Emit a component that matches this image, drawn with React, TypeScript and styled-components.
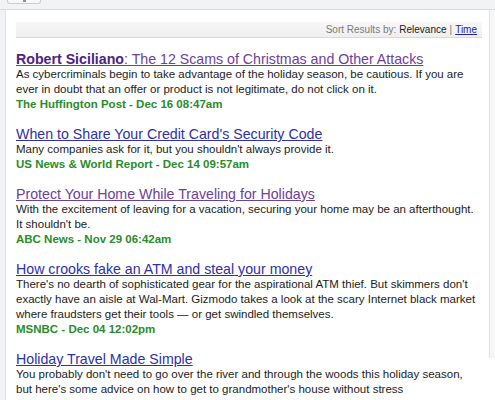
import styled, { createGlobalStyle } from 'styled-components'

const GlobalStyle = createGlobalStyle`
  html, body {
    margin: 0;
    padding: 0;
    background: #ffffff;
    font-family: "Liberation Sans", Arial, sans-serif;
  }
`;

const Page = styled.div`
  width: 495px;
  height: 400px;
  overflow: hidden;
  display: flex;
  flex-direction: column;
`;

const TopStrip = styled.div`
  height: 9px;
  flex: none;
  background: #f1f3f5;
  border-bottom: 1px solid #d6dce2;
  padding-left: 7px;
`;

const TabButton = styled.div`
  width: 32px;
  height: 3px;
  background: #f8f8f8;
  border: 1px solid #c9cdd1;
  border-top: none;
  border-radius: 0 0 3px 3px;
  display: flex;
  justify-content: center;
`;

const TabMark = styled.div`
  width: 3px;
  height: 2px;
  background: #8a8f96;
`;

const Body = styled.div`
  flex: 1;
  display: flex;
  align-items: flex-start;
`;

const LeftRail = styled.div`
  width: 5px;
  align-self: stretch;
  background: #f0f2f5;
  border-right: 1px solid #dde2e7;
`;

const Main = styled.div`
  flex: 1;
  padding: 12px 7px 0 10px;
`;

const RightRail = styled.div`
  width: 5px;
  height: 348px;
  background: #f6f6f6;
  border-left: 1px solid #e2e2e2;
`;

const SortBar = styled.div`
  height: 15px;
  display: flex;
  align-items: center;
  justify-content: flex-end;
  padding-right: 5px;
  background: linear-gradient(#f7f7f7, #efefef);
  border-bottom: 1px solid #d9d9d9;
  font-size: 10px;
  color: #7a7a7a;
  gap: 3px;
`;

const SortValue = styled.span<{ $link?: boolean }>`
  color: ${(p) => (p.$link ? '#2323a8' : '#1a1a1a')};
  text-decoration: ${(p) => (p.$link ? 'underline' : 'none')};
`;

const Results = styled.div`
  padding-top: 13px;
  width: 461px;
`;

const Item = styled.div`
  margin-bottom: 15px;
`;

const Title = styled.a<{ $visited?: boolean }>`
  display: block;
  font-size: 14.2px;
  line-height: 16px;
  color: ${(p) => (p.$visited ? '#6d4199' : '#3030a8')};
  text-decoration: underline;
  white-space: nowrap;
`;

const Author = styled.b`
  color: #4e2383;
`;

const Snippet = styled.div`
  font-size: 11.5px;
  line-height: 15px;
  color: #1c1c1c;
`;

const Source = styled.div`
  font-size: 11.5px;
  line-height: 14px;
  font-weight: bold;
  color: #2a8c2a;
`;

type Story = {
  author?: string;
  title: string;
  visited?: boolean;
  text: string;
  source: string;
};

const stories: Story[] = [
  {
    author: 'Robert Siciliano',
    title: ': The 12 Scams of Christmas and Other Attacks',
    visited: true,
    text: 'As cybercriminals begin to take advantage of the holiday season, be cautious. If you are ever in doubt that an offer or product is not legitimate, do not click on it.',
    source: 'The Huffington Post - Dec 16 08:47am',
  },
  {
    title: "When to Share Your Credit Card's Security Code",
    text: "Many companies ask for it, but you shouldn't always provide it.",
    source: 'US News & World Report - Dec 14 09:57am',
  },
  {
    title: 'Protect Your Home While Traveling for Holidays',
    visited: true,
    text: "With the excitement of leaving for a vacation, securing your home may be an afterthought. It shouldn't be.",
    source: 'ABC News - Nov 29 06:42am',
  },
  {
    title: 'How crooks fake an ATM and steal your money',
    text: "There's no dearth of sophisticated gear for the aspirational ATM thief. But skimmers don't exactly have an aisle at Wal-Mart. Gizmodo takes a look at the scary Internet black market where fraudsters get their tools \u2014 or get swindled themselves.",
    source: 'MSNBC - Dec 04 12:02pm',
  },
  {
    title: 'Holiday Travel Made Simple',
    text: "You probably don't need to go over the river and through the woods this holiday season, but here's some advice on how to get to grandmother's house without stress",
    source: 'Fox News - Dec 02 04:00am',
  },
];

function App() {
  return (
    <>
      <GlobalStyle />
      <Page>
        <TopStrip>
          <TabButton>
            <TabMark />
          </TabButton>
        </TopStrip>
        <Body>
          <LeftRail />
          <Main>
            <SortBar>
              <span>Sort Results by:</span>
              <SortValue>Relevance</SortValue>
              <span>|</span>
              <SortValue $link>Time</SortValue>
            </SortBar>
            <Results>
              {stories.map((s) => (
                <Item key={s.title}>
                  <Title href="#" $visited={s.visited}>
                    {s.author && <Author>{s.author}</Author>}
                    {s.title}
                  </Title>
                  <Snippet>{s.text}</Snippet>
                  <Source>{s.source}</Source>
                </Item>
              ))}
            </Results>
          </Main>
          <RightRail />
        </Body>
      </Page>
    </>
  )
}

export default App
